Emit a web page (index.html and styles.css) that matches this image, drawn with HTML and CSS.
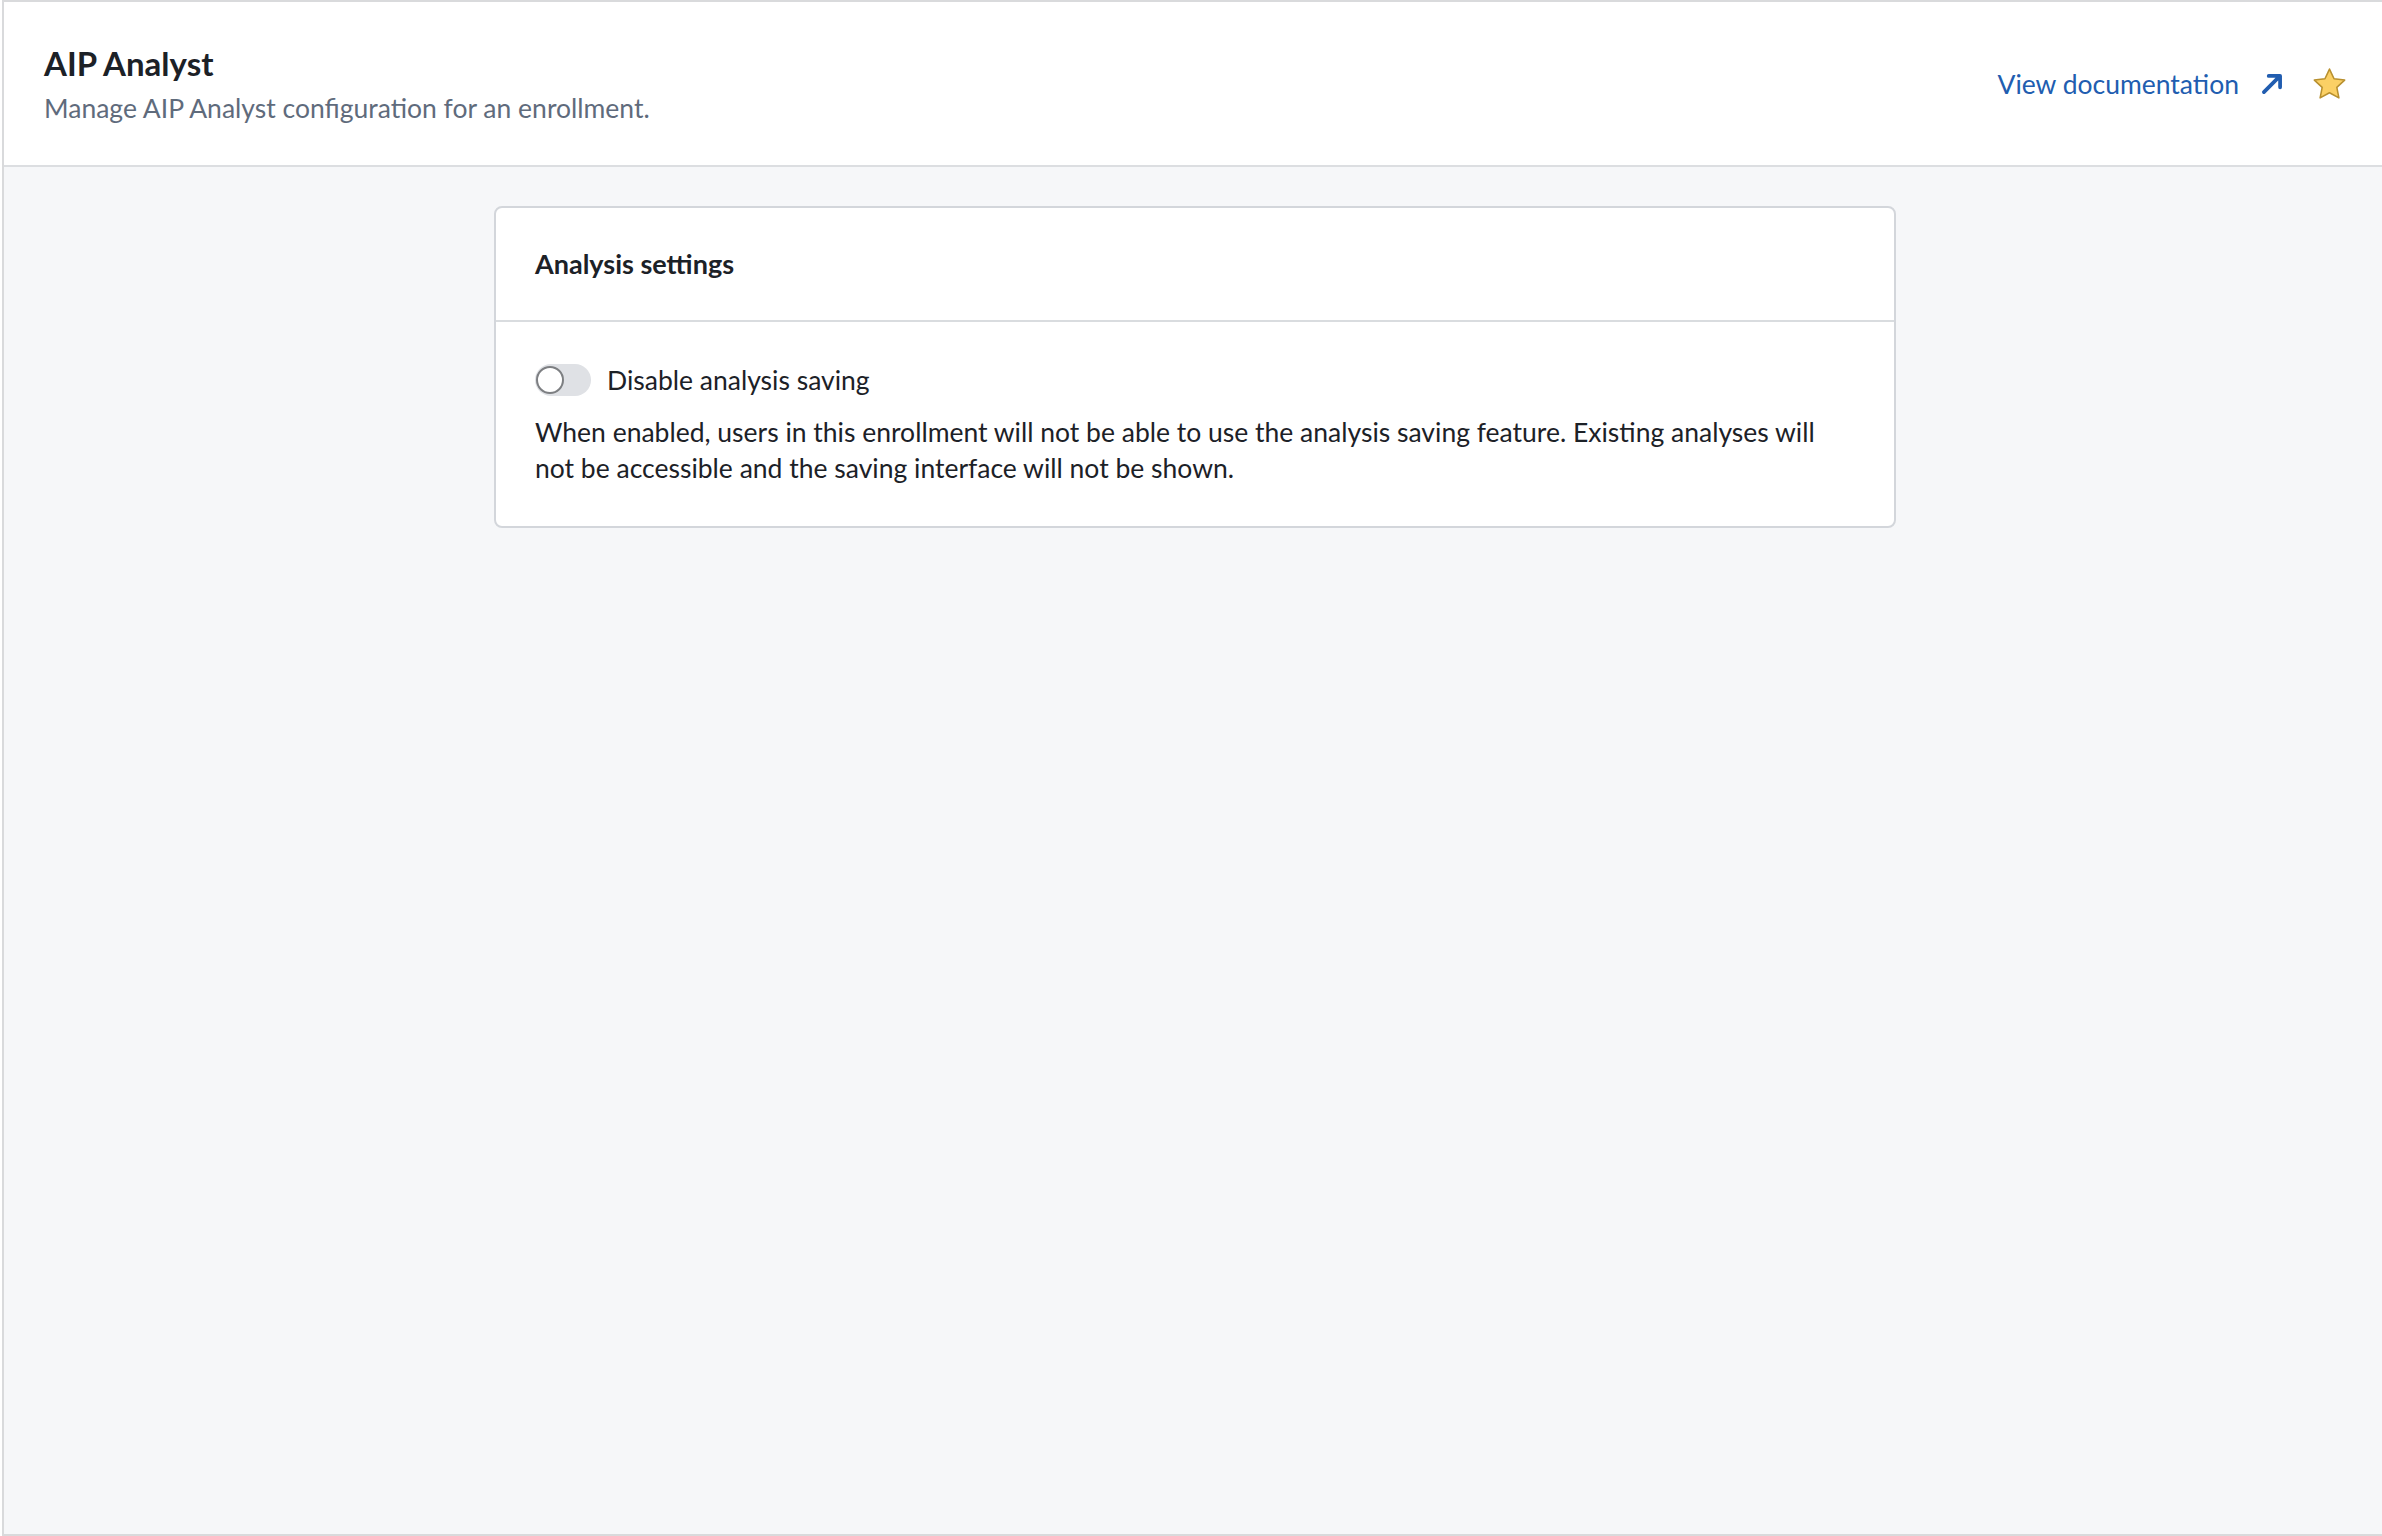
FILE: index.html
```html
<!DOCTYPE html>
<html lang="en">
<head>
<meta charset="UTF-8">
<meta name="viewport" content="width=device-width, initial-scale=1.0">
<title>AIP Analyst</title>
<link rel="stylesheet" href="styles.css">
</head>
<body>

<div class="frame">
    <!-- Шапка страницы -->
    <header class="page-header">
        <div class="titles">
            <h1 class="page-title">AIP Analyst</h1>
            <p class="page-subtitle">Manage AIP Analyst configuration for an enrollment.</p>
        </div>
        <div class="header-actions">
            <a class="doc-link" href="#">
                <span>View documentation</span>
                <svg class="doc-arrow" width="24" height="24" viewBox="0 0 16 16" fill="none">
                    <path d="M5.8 2.6h7.6v7.6M13.2 2.8L2.6 13.4" stroke="#215db0" stroke-width="2.5" stroke-linecap="round" stroke-linejoin="round"/>
                </svg>
            </a>
            <svg class="star" width="33" height="33" viewBox="0 0 32 32">
                <path d="M16 2L20.4 11.4L30.7 12.7L23.1 19.8L25.1 30L16 25L6.9 30L8.9 19.8L1.3 12.7L11.6 11.4Z" fill="#fbd065" stroke="#b8902f" stroke-width="1.5" stroke-linejoin="round"/>
            </svg>
        </div>
    </header>

    <!-- Основная область -->
    <main class="content">
        <section class="card">
            <div class="card-header">Analysis settings</div>
            <div class="card-body">
                <label class="switch-row">
                    <span class="switch"><span class="knob"></span></span>
                    <span class="switch-label">Disable analysis saving</span>
                </label>
                <p class="card-text">When enabled, users in this enrollment will not be able to use the analysis saving feature. Existing analyses will not be accessible and the saving interface will not be shown.</p>
            </div>
        </section>
    </main>
</div>

</body>
</html>
```

FILE: styles.css
```css
html, body {
    margin: 0;
    height: 100%;
}
body {
    background-color: #ffffff;
    font-family: Lato, "Open Sans", sans-serif;
    color: #1c2127;
}
.frame {
    box-sizing: border-box;
    height: 1536px;
    margin-left: 2px;
    border-top: 2px solid #d9dadc;
    border-left: 2px solid #d9dadc;
    border-bottom: 2px solid #d9dadc;
    background-color: #f6f7f9;
    display: flex;
    flex-direction: column;
}
.page-header {
    background-color: #ffffff;
    border-bottom: 2px solid #dcdee1;
    height: 165px;
    box-sizing: border-box;
    padding: 4px 36px 0 40px;
    display: flex;
    align-items: center;
    justify-content: space-between;
}
.titles {
    display: flex;
    flex-direction: column;
    gap: 5px;
}
.page-title {
    margin: 0;
    font-size: 33px;
    line-height: 40px;
    font-weight: 700;
    color: #1c2127;
}
.page-subtitle {
    margin: 0;
    font-size: 26.5px;
    line-height: 40px;
    color: #5f6b7c;
}
.header-actions {
    display: flex;
    align-items: center;
    gap: 29px;
    margin-top: -4px;
}
.doc-link {
    display: flex;
    align-items: center;
    gap: 21px;
    color: #215db0;
    text-decoration: none;
    font-size: 26.5px;
}
.doc-arrow, .star {
    display: block;
}
.content {
    flex: 1;
    padding: 39px 0 0 4px;
}
.card {
    width: 1402px;
    margin: 0 auto;
    box-sizing: border-box;
    background-color: #ffffff;
    border: 2px solid #d3d6db;
    border-radius: 8px;
}
.card-header {
    padding: 36px 39px;
    font-size: 27px;
    line-height: 40px;
    font-weight: 700;
    border-bottom: 2px solid #d9dcdf;
}
.card-body {
    padding: 40px 39px 40px 39px;
}
.switch-row {
    display: flex;
    align-items: center;
    gap: 16px;
    height: 36px;
    font-size: 26.5px;
}
.switch {
    box-sizing: border-box;
    width: 56px;
    height: 32px;
    padding: 2px 1px;
    border-radius: 16px;
    background-color: #dfe1e5;
    display: flex;
    align-items: center;
}
.knob {
    box-sizing: border-box;
    width: 28px;
    height: 28px;
    border-radius: 50%;
    background-color: #ffffff;
    border: 2px solid #7d7f82;
}
.card-text {
    margin: 16px 0 0;
    font-size: 26.5px;
    line-height: 36px;
}
```
